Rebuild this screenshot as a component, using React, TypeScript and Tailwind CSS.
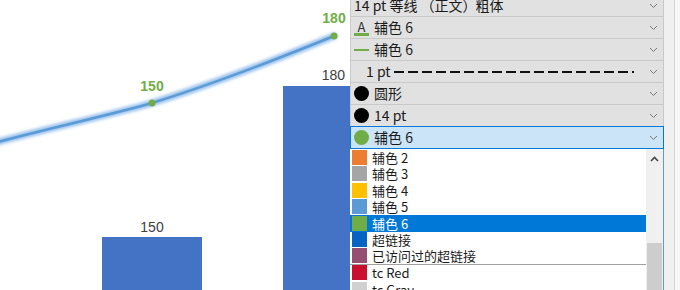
import React from 'react';

const FONT = { fontFamily: '"Microsoft YaHei", "Noto Sans CJK SC", "Noto Sans", sans-serif' };

const Chevron = ({ up = false }: { up?: boolean }) => (
  <svg width="9" height="6" viewBox="0 0 9 6" className="shrink-0">
    <path
      d={up ? 'M1 5 L4.5 1.5 L8 5' : 'M1 1 L4.5 4.5 L8 1'}
      fill="none"
      stroke={up ? '#444' : '#777'}
      strokeWidth={up ? 1.6 : 1}
    />
  </svg>
);

const Dot = ({ color }: { color: string }) => (
  <span className="inline-block w-[15px] h-[15px] rounded-full shrink-0" style={{ backgroundColor: color }} />
);

interface RowProps {
  children: React.ReactNode;
  selected?: boolean;
  first?: boolean;
}

function Row({ children, selected, first }: RowProps) {
  return (
    <div
      className={
        'flex items-center h-[23px] pl-[3px] pr-[5px] border ' +
        (first ? '' : '-mt-px ') +
        (selected
          ? 'relative bg-[#cce4f7] border-[#0078d7]'
          : 'bg-[#e1e1e1] border-[#c9c9c9]')
      }
    >
      <div className="flex-1 flex items-center gap-[5px] min-w-0">{children}</div>
      <Chevron />
    </div>
  );
}

const items = [
  { color: '#ed7d31', label: '辅色 2' },
  { color: '#a5a5a5', label: '辅色 3' },
  { color: '#ffc000', label: '辅色 4' },
  { color: '#5b9bd5', label: '辅色 5' },
  { color: '#70ad47', label: '辅色 6', active: true },
  { color: '#0563c1', label: '超链接' },
  { color: '#954f72', label: '已访问过的超链接', sep: true },
  { color: '#c8102e', label: 'tc Red' },
  { color: '#d0d0d0', label: 'tc Gray' },
];

function Chart() {
  return (
    <svg width="350" height="290" viewBox="0 0 350 290" className="block">
      <defs>
        <filter id="glow" x="-10%" y="-50%" width="120%" height="200%">
          <feGaussianBlur stdDeviation="1.6" />
        </filter>
      </defs>
      {/* bars */}
      <rect x="102" y="237" width="100" height="60" fill="#4472c4" />
      <rect x="283" y="86" width="67" height="210" fill="#4472c4" />
      <text x="152" y="232" textAnchor="middle" fontSize="14" fill="#404040" fontFamily="'Liberation Sans', Arial, sans-serif">150</text>
      <text x="345" y="80" textAnchor="end" fontSize="14" fill="#404040" fontFamily="'Liberation Sans', Arial, sans-serif">180</text>
      {/* line with glow */}
      <path
        d="M-10 144 C 50 128, 110 115, 152 103 C 210 85, 280 58, 334 36"
        fill="none"
        stroke="#9cc3ee"
        strokeWidth="7"
        strokeLinecap="round"
        filter="url(#glow)"
      />
      <path
        d="M-10 144 C 50 128, 110 115, 152 103 C 210 85, 280 58, 334 36"
        fill="none"
        stroke="#5b9bd5"
        strokeWidth="2.5"
        strokeLinecap="round"
      />
      <circle cx="152" cy="103" r="3.5" fill="#70ad47" />
      <circle cx="334" cy="36" r="3.5" fill="#70ad47" />
      <text x="152" y="91" textAnchor="middle" fontSize="14" fontWeight="bold" fill="#70ad47" fontFamily="'Liberation Sans', Arial, sans-serif">150</text>
      <text x="334" y="23" textAnchor="middle" fontSize="14" fontWeight="bold" fill="#70ad47" fontFamily="'Liberation Sans', Arial, sans-serif">180</text>
    </svg>
  );
}

export default function App() {
  return (
    <div className="w-[680px] h-[290px] overflow-hidden flex bg-white" style={FONT}>
      <Chart />
      <div className="w-[330px] h-[290px] flex bg-[#f0f0f0]">
        <div className="w-[314px] flex flex-col text-[14px] text-[#1a1a1a] -mt-[6px]">
          <Row first>
            <span className="whitespace-nowrap">14 pt 等线</span>
            <span className="whitespace-nowrap ml-[-2px]">（正文）</span>
            <span className="whitespace-nowrap ml-[-6px]">粗体</span>
          </Row>
          <Row>
            <span className="relative w-[15px] h-[16px] flex justify-center shrink-0">
              <span className="text-[13px] leading-[14px] text-[#333]">A</span>
              <span className="absolute bottom-0 left-0 w-[15px] h-[3px] bg-[#70ad47]" />
            </span>
            <span>辅色 6</span>
          </Row>
          <Row>
            <span className="w-[15px] h-[2px] bg-[#70ad47] shrink-0" />
            <span>辅色 6</span>
          </Row>
          <Row>
            <span className="ml-[12px] whitespace-nowrap">1 pt</span>
            <svg width="240" height="4" className="shrink-0 ml-[-2px]">
              <line x1="0" y1="2" x2="240" y2="2" stroke="#111" strokeWidth="2" strokeDasharray="10 4" />
            </svg>
          </Row>
          <Row>
            <Dot color="#000" />
            <span>圆形</span>
          </Row>
          <Row>
            <Dot color="#000" />
            <span>14 pt</span>
          </Row>
          <Row selected>
            <Dot color="#70ad47" />
            <span>辅色 6</span>
          </Row>
          <div className="flex flex-1 bg-white border-r border-[#5b9bd5] text-[13px] -mt-px">
            <div className="flex-1 flex flex-col pt-px">
              {items.map((it) => (
                <div
                  key={it.label}
                  className={
                    'flex items-center h-[16.5px] pl-[2px] gap-[5px] ' +
                    (it.active ? 'bg-[#0078d7] text-white ' : '') +
                    (it.sep ? 'border-b border-[#a0a0a0]' : '')
                  }
                >
                  <span className="w-[15px] h-[15px] shrink-0" style={{ backgroundColor: it.color }} />
                  <span className="whitespace-nowrap leading-[15px]">{it.label}</span>
                </div>
              ))}
            </div>
            <div className="w-[17px] bg-[#f0f0f0] flex flex-col">
              <div className="h-[14px] flex items-end justify-center">
                <Chevron up />
              </div>
              <div className="h-[81px]" />
              <div className="flex-1 bg-[#cdcdcd] mx-px" />
            </div>
          </div>
        </div>
        <div className="w-[10px]" />
        <div className="w-[1px] bg-[#d4d4d4]" />
        <div className="flex-1 bg-[#f7f7f7]" />
      </div>
    </div>
  );
}
